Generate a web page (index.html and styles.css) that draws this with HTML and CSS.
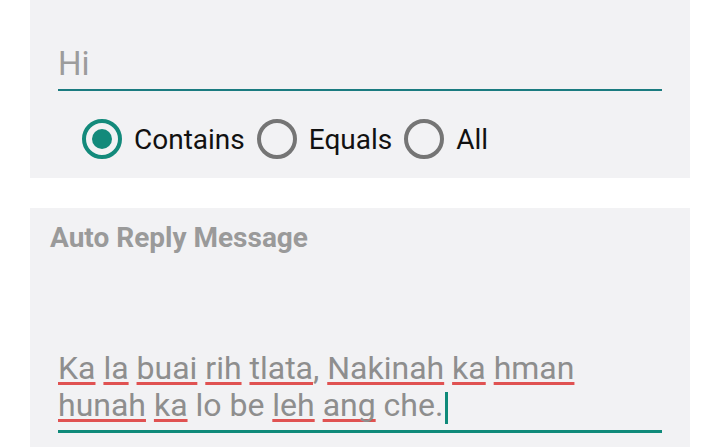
FILE: index.html
```html
<!DOCTYPE html>
<html>
<head>
  <title>Auto Reply</title>
  <link rel="stylesheet" href="styles.css">
</head>
<body>
<!-- Keyword card -->
<div class="card card-keyword">
  <div class="field">
    <span class="field-text hint">Hi</span>
  </div>

  <div class="radio-group">
    <label class="radio checked"><span class="radio-circle"></span>Contains</label>
    <label class="radio"><span class="radio-circle"></span>Equals</label>
    <label class="radio"><span class="radio-circle"></span>All</label>
  </div>
</div>

<!-- Reply message card -->
<div class="card card-reply">
  <div class="card-title">Auto Reply Message</div>

  <div class="message-field">
    <div class="message-text"><span class="typo">Ka</span> <span class="typo">la</span> <span class="typo">buai</span> <span class="typo">rih</span> <span class="typo">tlata</span>, <span class="typo">Nakinah</span> <span class="typo">ka</span> <span class="typo">hman</span><br><span class="typo">hunah</span> <span class="typo">ka</span> lo be <span class="typo">leh</span> <span class="typo">ang</span> che.<span class="cursor"></span></div>
  </div>
</div>
</body>
</html>
```

FILE: styles.css
```css
/* Base */
body {
  margin: 0;
  background-color: #ffffff;
  font-family: Roboto, "Noto Sans", sans-serif;
}

.card {
  margin: 0 30px;
  background-color: #f2f2f4;
}

/* Keyword card */
.card-keyword {
  height: 178px;
  padding: 0 28px;
  box-sizing: border-box;
  display: flex;
  flex-direction: column;
}

.field {
  margin-top: 44px;
  height: 47px;
  padding-bottom: 5px;
  box-sizing: border-box;
  border-bottom: 2px solid #1b7b80;
  display: flex;
  align-items: flex-end;
}

.field-text {
  font-size: 33px;
  line-height: 40px;
}

.hint {
  color: #9c9c9c;
}

.radio-group {
  display: flex;
  align-items: center;
  gap: 12px;
  margin-top: 28px;
  padding-left: 24px;
}

.radio {
  display: flex;
  align-items: center;
  gap: 12px;
  font-size: 28px;
  color: #111111;
}

.radio-circle {
  width: 40px;
  height: 40px;
  box-sizing: border-box;
  border: 4px solid #757575;
  border-radius: 50%;
  display: flex;
  align-items: center;
  justify-content: center;
}

.radio.checked .radio-circle {
  border-color: #138a7b;
}

.radio.checked .radio-circle::after {
  content: "";
  width: 20px;
  height: 20px;
  border-radius: 50%;
  background-color: #138a7b;
}

/* Reply card */
.card-reply {
  margin-top: 30px;
  height: 239px;
  box-sizing: border-box;
  padding: 14px 28px 0 20px;
  overflow: hidden;
}

.card-title {
  font-size: 28px;
  font-weight: bold;
  color: #9a9a9a;
  line-height: 32px;
}

.message-field {
  margin-top: 96px;
  margin-left: 8px;
  border-bottom: 3px solid #0f8a7a;
  padding-bottom: 6px;
}

.message-text {
  font-size: 32px;
  line-height: 37px;
  color: #8e8e8e;
}

.typo {
  text-decoration: underline 3px #e05252;
  text-underline-offset: 3px;
  text-decoration-skip-ink: none;
}

.cursor {
  display: inline-block;
  width: 3px;
  height: 32px;
  margin-left: 2px;
  vertical-align: -8px;
  background-color: #0f8a7a;
}
```
